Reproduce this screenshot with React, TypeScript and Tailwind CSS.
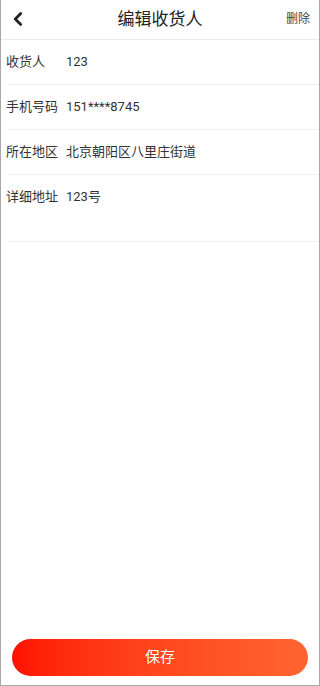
import { ChevronLeft } from 'lucide-react';

const rows = [
  { label: '收货人', value: '123' },
  { label: '手机号码', value: '151****8745' },
  { label: '所在地区', value: '北京朝阳区八里庄街道' },
];

export default function App() {
  return (
    <div
      className="flex h-[686px] w-[320px] flex-col border-x border-b border-[#a8a8a8] bg-white text-[#333]"
      style={{ fontFamily: 'Roboto, "Noto Sans CJK SC", sans-serif' }}
    >
      {/* Header */}
      <div className="relative flex h-[40px] items-center justify-center border-b border-[#ececec]">
        <ChevronLeft className="absolute left-[6px] top-[8px] h-[22px] w-[22px] text-[#222]" strokeWidth={3} />
        <h1 className="text-[17px] leading-none text-[#222]">编辑收货人</h1>
        <span className="absolute right-[9px] top-[13px] text-[12px] leading-none text-[#444]">删除</span>
      </div>

      {/* Form */}
      <div className="pl-[5px]">
        {rows.map((row) => (
          <div key={row.label} className="flex h-[45px] items-center border-b border-[#efefef] text-[13px]">
            <span className="w-[60px] shrink-0">{row.label}</span>
            <span>{row.value}</span>
          </div>
        ))}
        <div className="flex h-[67px] items-start border-b border-[#efefef] pt-[13px] text-[13px]">
          <span className="w-[60px] shrink-0 leading-[18px]">详细地址</span>
          <span className="leading-[18px]">123号</span>
        </div>
      </div>

      {/* Save button */}
      <div className="mt-auto px-[11px] pb-[9px]">
        <button className="flex h-[37px] w-full items-center justify-center rounded-full bg-gradient-to-r from-[#ff0f00] to-[#ff6530] text-[15px] text-white">
          保存
        </button>
      </div>
    </div>
  );
}
